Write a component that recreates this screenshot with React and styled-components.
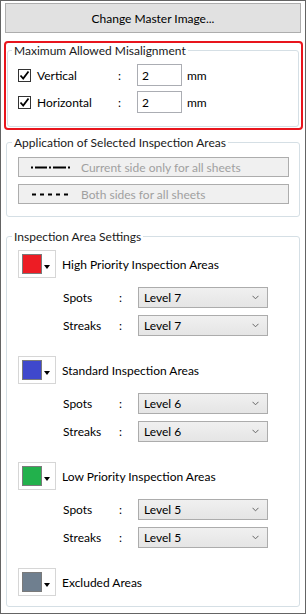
import React from 'react';
import styled, { createGlobalStyle } from 'styled-components';

const GlobalStyle = createGlobalStyle`
	body {
		margin: 0;
		background: #ffffff;
		font-family: Lato, 'Noto Sans', 'Liberation Sans', sans-serif;
		font-size: 12px;
		color: #000;
	}
`;

const Window = styled.div`
	width: 306px;
	height: 614px;
	box-sizing: border-box;
	border: 1px solid #646464;
	padding: 2px 4px 0 4px;
	display: flex;
	flex-direction: column;
	background: #fff;
`;

const MasterButton = styled.button`
	height: 30px;
	width: 100%;
	flex-shrink: 0;
	background: #e1e1e1;
	border: 1px solid #adadad;
	font: inherit;
	color: #000;
	padding: 0;
`;

const Highlight = styled.div`
	margin: 8px -2px 0 -1px;
	border: 2px solid #e8151d;
	border-radius: 4px;
	padding: 0 2px 1px 1px;
`;

const Group = styled.fieldset`
	margin: ${(p) => p.$top || 0}px ${(p) => (p.$flush ? 0 : 1)}px 0;
	padding: ${(p) => p.$pad || '0'};
	border: 1px solid #d5dfe5;
	border-radius: 3px;
	min-width: 0;
	flex-shrink: 0;
`;

const Legend = styled.legend`
	margin-left: -6px;
	padding: 0 2px;
	line-height: 15px;
	color: #1a1a1a;
`;

const FieldRow = styled.div`
	display: grid;
	grid-template-columns: 100px 19px 45px auto;
	align-items: center;
	height: 22px;
	margin-top: ${(p) => p.$top}px;
`;

const CheckLabel = styled.label`
	display: flex;
	align-items: center;
	gap: 6px;
`;

const CheckBox = styled.span`
	width: 13px;
	height: 13px;
	box-sizing: border-box;
	border: 1px solid #333;
	background: #fff;
	display: flex;
	align-items: center;
	justify-content: center;
`;

const Colon = styled.span``;

const NumberBox = styled.div`
	height: 22px;
	box-sizing: border-box;
	border: 1px solid #abadb3;
	padding: 0 0 0 4px;
	display: flex;
	align-items: center;
`;

const Unit = styled.span`
	padding-left: 5px;
`;

const OptionButton = styled.div`
	height: 20px;
	width: 271px;
	box-sizing: border-box;
	border: 1px solid #adadad;
	background: #f0f0f0;
	color: #a0a0a0;
	display: flex;
	align-items: center;
	padding-left: 12px;
	gap: 11px;
	margin-top: ${(p) => p.$top || 0}px;
`;

const Section = styled.div`
	margin-top: ${(p) => p.$top || 0}px;
`;

const SectionHeader = styled.div`
	display: flex;
	align-items: center;
	gap: 6px;
	height: 28px;
`;

const ColorButton = styled.div`
	width: 38px;
	height: 28px;
	box-sizing: border-box;
	border: 1px solid #d6d6d6;
	background: #fff;
	display: flex;
	align-items: center;
	padding-left: 3px;
	gap: 2px;
`;

const Swatch = styled.span`
	width: 20px;
	height: 20px;
	box-sizing: border-box;
	border: 1px solid #7a7a7a;
	background: ${(p) => p.$color};
`;

const DropArrow = styled.span`
	width: 0;
	height: 0;
	margin-top: 6px;
	border-left: 3px solid transparent;
	border-right: 3px solid transparent;
	border-top: 4px solid #000;
`;

const LevelRow = styled.div`
	display: grid;
	grid-template-columns: 56px 19px 130px;
	align-items: center;
	height: 22px;
	padding-left: 45px;
	margin-top: ${(p) => p.$top}px;
`;

const Select = styled.div`
	height: 21px;
	box-sizing: border-box;
	border: 1px solid #acacac;
	background: linear-gradient(#f0f0f0, #e5e5e5);
	display: flex;
	align-items: center;
	justify-content: space-between;
	padding: 0 8px 0 5px;
`;

function Check() {
	return (
		<svg width="11" height="11" viewBox="0 0 11 11">
			<path d="M1.5 5.5 L4.2 8.5 L9.5 1.5" fill="none" stroke="#000" strokeWidth="1.8" />
		</svg>
	);
}

function Chevron() {
	return (
		<svg width="7" height="5" viewBox="0 0 7 5">
			<path d="M0.5 0.8 L3.5 3.8 L6.5 0.8" fill="none" stroke="#666" strokeWidth="1" />
		</svg>
	);
}

function DashDot() {
	return (
		<svg width="39" height="3" viewBox="0 0 39 3">
			<g fill="#000">
				<rect x="0" y="0.5" width="2" height="2" />
				<rect x="4" y="0.5" width="12" height="2" />
				<rect x="18" y="0.5" width="2" height="2" />
				<rect x="22" y="0.5" width="13" height="2" />
				<rect x="37" y="0.5" width="2" height="2" />
			</g>
		</svg>
	);
}

function Dashed() {
	return (
		<svg width="39" height="3" viewBox="0 0 39 3">
			<g fill="#000">
				{[0, 8, 16, 24, 32].map((x) => (
					<rect key={x} x={x + 1} y="0.5" width="4" height="2" />
				))}
			</g>
		</svg>
	);
}

const areas = [
	{ title: 'High Priority Inspection Areas', color: '#ed1c24', level: 7 },
	{ title: 'Standard Inspection Areas', color: '#3f48cc', level: 6 },
	{ title: 'Low Priority Inspection Areas', color: '#22b14c', level: 5 },
	{ title: 'Excluded Areas', color: '#6f7f8f' },
];

function LevelSelect({ label, level, top }) {
	return (
		<LevelRow $top={top}>
			<span>{label}</span>
			<Colon>:</Colon>
			<Select>
				Level {level}
				<Chevron />
			</Select>
		</LevelRow>
	);
}

function App() {
	return (
		<>
			<GlobalStyle />
			<Window>
				<MasterButton>Change Master Image...</MasterButton>

				<Highlight>
					<Group $flush $pad="0 0 13px 10px">
						<Legend>Maximum Allowed Misalignment</Legend>
						<FieldRow $top={6}>
							<CheckLabel>
								<CheckBox><Check /></CheckBox>
								Vertical
							</CheckLabel>
							<Colon>:</Colon>
							<NumberBox>2</NumberBox>
							<Unit>mm</Unit>
						</FieldRow>
						<FieldRow $top={5}>
							<CheckLabel>
								<CheckBox><Check /></CheckBox>
								Horizontal
							</CheckLabel>
							<Colon>:</Colon>
							<NumberBox>2</NumberBox>
							<Unit>mm</Unit>
						</FieldRow>
					</Group>
				</Highlight>

				<Group $top={5} $pad="7px 0 12px 11px">
					<Legend>Application of Selected Inspection Areas</Legend>
					<OptionButton>
						<DashDot />
						Current side only for all sheets
					</OptionButton>
					<OptionButton $top={7}>
						<Dashed />
						Both sides for all sheets
					</OptionButton>
				</Group>

				<Group $top={12} $pad="6px 0 10px 11px">
					<Legend>Inspection Area Settings</Legend>
					{areas.map((area, i) => (
						<Section key={area.title} $top={i === 0 ? 0 : 20}>
							<SectionHeader>
								<ColorButton>
									<Swatch $color={area.color} />
									<DropArrow />
								</ColorButton>
								{area.title}
							</SectionHeader>
							{area.level && (
								<>
									<LevelSelect label="Spots" level={area.level} top={8} />
									<LevelSelect label="Streaks" level={area.level} top={6} />
								</>
							)}
						</Section>
					))}
				</Group>
			</Window>
		</>
	);
}

export default App;
